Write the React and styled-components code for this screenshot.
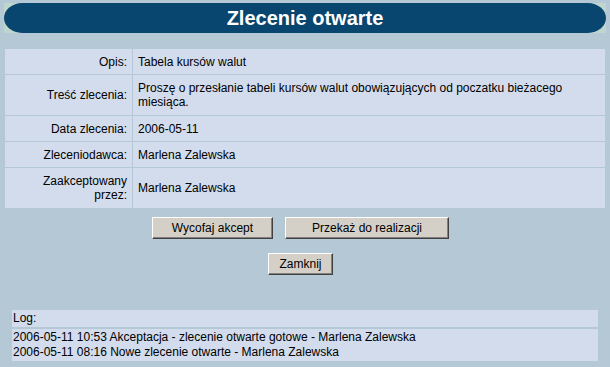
import styled, { createGlobalStyle } from "styled-components";

const GlobalStyle = createGlobalStyle`
  html, body {
    margin: 0;
    padding: 0;
    background: #b5c8d6;
  }
  body {
    font-family: "Liberation Sans", Arial, sans-serif;
    font-size: 12px;
    color: #000;
  }
`;

const rows = [
  { label: "Opis:", value: "Tabela kursów walut" },
  {
    label: "Treść zlecenia:",
    value:
      "Proszę o przesłanie tabeli kursów walut obowiązujących od poczatku bieżacego miesiąca.",
    tall: true,
  },
  { label: "Data zlecenia:", value: "2006-05-11" },
  { label: "Zleceniodawca:", value: "Marlena Zalewska" },
  { label: ["Zaakceptowany", <br key="b" />, "przez:"], value: "Marlena Zalewska", tall: true },
];

const logEntries = [
  "2006-05-11 10:53 Akceptacja - zlecenie otwarte gotowe - Marlena Zalewska",
  "2006-05-11 08:16 Nowe zlecenie otwarte - Marlena Zalewska",
];

function App() {
  return (
    <>
      <GlobalStyle />
      <Page>
        <TitleBar>
          <TitlePill>Zlecenie otwarte</TitlePill>
        </TitleBar>

        <DetailsTable>
          <tbody>
            {rows.map((row, i) => (
              <Row key={i} $tall={row.tall}>
                <LabelCell>{row.label}</LabelCell>
                <ValueCell>{row.value}</ValueCell>
              </Row>
            ))}
          </tbody>
        </DetailsTable>

        <Actions>
          <ButtonRow>
            <Btn $width={121}>Wycofaj akcept</Btn>
            <Btn $width={164}>Przekaż do realizacji</Btn>
          </ButtonRow>
          <ButtonRow>
            <Btn $width={65}>Zamknij</Btn>
          </ButtonRow>
        </Actions>

        <Log>
          <LogHeader>Log:</LogHeader>
          <LogBody>
            {logEntries.map((entry) => (
              <div key={entry}>{entry}</div>
            ))}
          </LogBody>
        </Log>
      </Page>
    </>
  );
}

export default App;

const Page = styled.div`
  width: 610px;
  height: 367px;
  padding-top: 3px;
  box-sizing: border-box;
`;

const TitleBar = styled.div`
  margin: 0 4px;
  height: 30px;
  background: #bfd6ce;
`;

const TitlePill = styled.h1`
  margin: 0;
  height: 30px;
  background: #08466f;
  border-radius: 18px / 15px;
  color: #fff;
  font-size: 20px;
  font-weight: bold;
  line-height: 30px;
  text-align: center;
`;

const DetailsTable = styled.table`
  width: 602px;
  margin: 15px 0 0 4px;
  border-collapse: separate;
  border-spacing: 1px;
  table-layout: fixed;
`;

const Row = styled.tr`
  height: ${({ $tall }) => ($tall ? "40px" : "25px")};
`;

const LabelCell = styled.td`
  width: 121px;
  padding: 0 5px 0 1px;
  background: #d2dcec;
  text-align: right;
  vertical-align: middle;
  line-height: 14px;
`;

const ValueCell = styled.td`
  padding: 0 30px 0 5px;
  background: #d2dcec;
  vertical-align: middle;
  line-height: 14px;
`;

const Actions = styled.div`
  display: flex;
  flex-direction: column;
  align-items: center;
  gap: 14px;
  margin-top: 8px;
  padding-right: 9px;
`;

const ButtonRow = styled.div`
  display: flex;
  gap: 12px;
`;

const Btn = styled.button`
  width: ${({ $width }) => $width}px;
  height: 22px;
  padding: 0;
  background: #d4d0c8;
  border: 1px solid;
  border-color: #ffffff #404040 #404040 #ffffff;
  box-shadow: inset -1px -1px 0 #808080;
  font-family: "Liberation Sans", Arial, sans-serif;
  font-size: 12px;
  color: #000;
  cursor: pointer;
`;

const Log = styled.div`
  display: flex;
  flex-direction: column;
  gap: 2px;
  margin: 35px 12px 0 12px;
`;

const LogHeader = styled.div`
  height: 17px;
  padding: 0 1px;
  background: #d2dcec;
  line-height: 17px;
`;

const LogBody = styled.div`
  height: 32px;
  padding: 1px 1px;
  box-sizing: border-box;
  background: #d2dcec;
  line-height: 15px;
`;
